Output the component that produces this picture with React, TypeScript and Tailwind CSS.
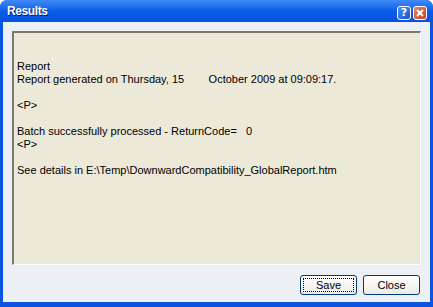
const lines = [
  "",
  "",
  "Report",
  "Report generated on Thursday, 15\u00a0\u00a0\u00a0\u00a0\u00a0\u00a0\u00a0\u00a0October 2009 at 09:09:17.",
  "",
  "<P>",
  "",
  "Batch successfully processed - ReturnCode=\u00a0\u00a0\u00a00",
  "<P>",
  "",
  "See details in E:\\Temp\\DownwardCompatibility_GlobalReport.htm",
];

const TitleButton = ({ kind }: { kind: "help" | "close" }) => (
  <div
    className={
      "w-[14px] h-[14px] rounded-[3px] border border-white flex items-center justify-center " +
      (kind === "help"
        ? "bg-gradient-to-br from-[#4d8cf5] to-[#1c52d6]"
        : "bg-gradient-to-br from-[#e8846a] to-[#c6401e]")
    }
  >
    {kind === "help" ? (
      <span className="text-white font-bold text-[11px] leading-none [font-family:'DejaVu_Sans',sans-serif]">?</span>
    ) : (
      <svg width="8" height="8" viewBox="0 0 8 8">
        <path d="M1 1 L7 7 M7 1 L1 7" stroke="white" strokeWidth="2" />
      </svg>
    )}
  </div>
);

const Btn = ({ label, focused }: { label: string; focused?: boolean }) => (
  <button className="w-[57px] h-[20px] rounded-[3px] border border-[#003c74] bg-gradient-to-b from-white to-[#ecebe6] p-[2px] text-black text-[11px]">
    <div
      className={
        "w-full h-full flex items-center justify-center " +
        (focused ? "border border-dotted border-black" : "")
      }
    >
      {label}
    </div>
  </button>
);

export default function App() {
  return (
    <div className="w-[433px] h-[307px] bg-[#0a54e0] rounded-t-[7px] flex flex-col [font-family:'Liberation_Sans',Arial,sans-serif]">
      <div className="h-[22px] rounded-t-[7px] bg-gradient-to-b from-[#3d8bf8] via-[#0a5ce8] to-[#0553e0] flex items-center pl-[7px] pr-[6px]">
        <span className="text-white font-bold text-[12px] [text-shadow:1px_1px_0_#0a1e6e] tracking-[-0.4px]">
          Results
        </span>
        <div className="ml-auto flex gap-[2px] mt-[3px]">
          <TitleButton kind="help" />
          <TitleButton kind="close" />
        </div>
      </div>
      <div className="flex-1 mx-[3px] mb-[5px] bg-[#eceff4] flex flex-col pt-[9px] px-[9px]">
        <div className="h-[234px] bg-[#ece9d8] border-t-2 border-l-2 border-t-[#7a7870] border-l-[#7a7870] border-r border-b border-r-white border-b-white pl-[3px] pt-[1px] text-[11px] leading-[13px] text-black">
          {lines.map((l, i) => (
            <div key={i} className="h-[13px] whitespace-pre">
              {l}
            </div>
          ))}
        </div>
        <div className="flex justify-end gap-[6px] mt-[10px] pr-[1px]">
          <Btn label="Save" focused />
          <Btn label="Close" />
        </div>
      </div>
    </div>
  );
}
